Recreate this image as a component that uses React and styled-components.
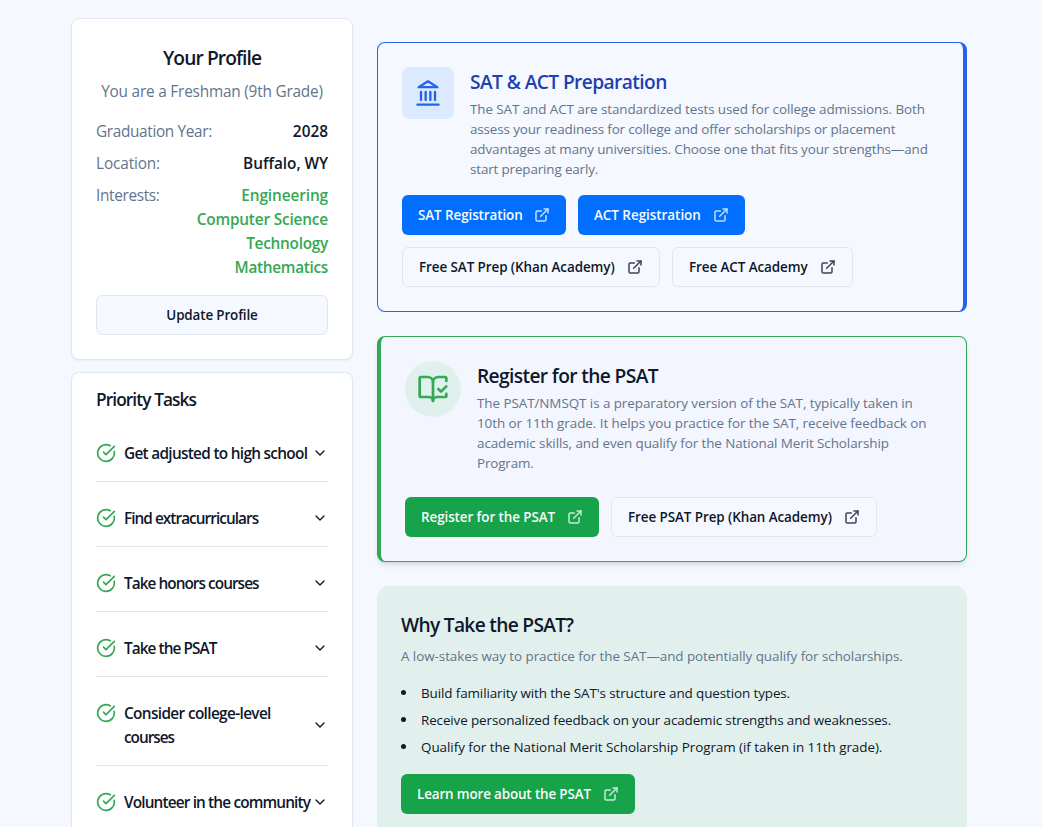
import React from 'react';
import styled, { createGlobalStyle } from 'styled-components';
import {
  BookOpenCheck,
  ChevronDown,
  CircleCheckBig,
  ExternalLink,
} from 'lucide-react';

const interests = [
  { name: 'Engineering', track: -0.1 },
  { name: 'Computer Science', track: -0.17 },
  { name: 'Technology', track: -0.26 },
  { name: 'Mathematics', track: -0.3 },
];

const tasks = [
  { lines: [['Get adjusted to high school', -0.7]] },
  { lines: [['Find extracurriculars', -0.96]] },
  { lines: [['Take honors courses', -0.96]] },
  { lines: [['Take the PSAT', -0.93]] },
  {
    lines: [
      ['Consider college-level', -0.64],
      ['courses', -1.03],
    ],
  },
  { lines: [['Volunteer in the community', -0.85]] },
];

const satText = [
  ['The SAT and ACT are standardized tests used for college admissions. Both', -0.09],
  ['assess your readiness for college and offer scholarships or placement', -0.14],
  ['advantages at many universities. Choose one that fits your strengths—and', -0.106],
  ['start preparing early.', -0.15],
];

const psatText = [
  ['The PSAT/NMSQT is a preparatory version of the SAT, typically taken in', -0.07],
  ['10th or 11th grade. It helps you practice for the SAT, receive feedback on', -0.06],
  ['academic skills, and even qualify for the National Merit Scholarship', -0.09],
  ['Program.', -0.15],
];

const reasons = [
  ["Build familiarity with the SAT's structure and question types.", -0.11],
  ['Receive personalized feedback on your academic strengths and weaknesses.', -0.12],
  ['Qualify for the National Merit Scholarship Program (if taken in 11th grade).', -0.05],
];

function LandmarkIcon() {
  return (
    <svg
      width="28"
      height="28"
      viewBox="0 0 24 24"
      fill="none"
      stroke="currentColor"
      strokeWidth="2"
      strokeLinecap="round"
      strokeLinejoin="round"
    >
      <line x1="3" x2="21" y1="22" y2="22" />
      <line x1="6" x2="6" y1="18" y2="11" />
      <line x1="10" x2="10" y1="18" y2="11" />
      <line x1="14" x2="14" y1="18" y2="11" />
      <line x1="18" x2="18" y1="18" y2="11" />
      <polygon points="12 2 20 7 4 7" />
    </svg>
  );
}

function LinkButton({ children, width, track, variant }) {
  return (
    <StyledLink href="#" $width={width} $track={track} $variant={variant}>
      {children}
      <ExternalLink size={16} strokeWidth={2.25} />
    </StyledLink>
  );
}

function Profile() {
  return (
    <ProfileCard>
      <ProfileTitle $track={-0.9}>Your Profile</ProfileTitle>
      <Grade>You are a Freshman (9th Grade)</Grade>
      <Details>
        <DetailRow>
          <Label $track={-0.34}>Graduation Year:</Label>
          <Value $track={0}>2028</Value>
        </DetailRow>
        <DetailRow>
          <Label $track={-0.13}>Location:</Label>
          <Value $track={-0.04}>Buffalo, WY</Value>
        </DetailRow>
        <DetailRow>
          <Label $track={-0.33}>Interests:</Label>
          <InterestList>
            {interests.map((item) => (
              <Interest key={item.name} $track={item.track}>
                {item.name}
              </Interest>
            ))}
          </InterestList>
        </DetailRow>
      </Details>
      <UpdateButton>Update Profile</UpdateButton>
    </ProfileCard>
  );
}

function PriorityTasks() {
  return (
    <TasksCard>
      <TasksTitle>Priority Tasks</TasksTitle>
      {tasks.map((task) => (
        <Task key={task.lines[0][0]}>
          <TaskIcon size={20} />
          <TaskName>
            {task.lines.map(([text, track]) => (
              <TaskLine key={text} $track={track}>
                {text}
              </TaskLine>
            ))}
          </TaskName>
          <ChevronDown size={16} />
        </Task>
      ))}
    </TasksCard>
  );
}

function CardText({ title, track, color, lines }) {
  return (
    <div>
      <Title $track={track} $color={color}>
        {title}
      </Title>
      <Description>
        {lines.map(([text, lineTrack]) => (
          <Line key={text} $track={lineTrack}>
            {text}
          </Line>
        ))}
      </Description>
    </div>
  );
}

function App() {
  return (
    <>
      <GlobalStyle />
      <Page>
        <Sidebar>
          <Profile />
          <PriorityTasks />
        </Sidebar>
        <Main>
          <SatCard>
            <CardHead>
              <SquareIcon>
                <LandmarkIcon />
              </SquareIcon>
              <CardText
                title="SAT & ACT Preparation"
                track={-0.6}
                color="#1e40af"
                lines={satText}
              />
            </CardHead>
            <Actions $top={16}>
              <LinkButton variant="blue" width={164} track={-0.09}>
                SAT Registration
              </LinkButton>
              <LinkButton variant="blue" width={167} track={-0.03}>
                ACT Registration
              </LinkButton>
              <LinkButton width={258} track={-0.08}>
                Free SAT Prep (Khan Academy)
              </LinkButton>
              <LinkButton width={181} track={-0.08}>
                Free ACT Academy
              </LinkButton>
            </Actions>
          </SatCard>

          <PsatCard>
            <CardHead>
              <RoundIcon>
                <BookOpenCheck size={32} />
              </RoundIcon>
              <CardText title="Register for the PSAT" track={-0.63} lines={psatText} />
            </CardHead>
            <Actions $top={24}>
              <LinkButton variant="green" width={194} track={-0.09}>
                Register for the PSAT
              </LinkButton>
              <LinkButton width={266} track={-0.08}>
                Free PSAT Prep (Khan Academy)
              </LinkButton>
            </Actions>
          </PsatCard>

          <WhyCard>
            <Title $track={-0.7}>Why Take the PSAT?</Title>
            <WhyText>
              A low-stakes way to practice for the SAT—and potentially qualify for scholarships.
            </WhyText>
            <ReasonList>
              {reasons.map(([text, track]) => (
                <Reason key={text} $track={track}>
                  {text}
                </Reason>
              ))}
            </ReasonList>
            <LinkButton variant="green" width={234} track={-0.15}>
              Learn more about the PSAT
            </LinkButton>
          </WhyCard>
        </Main>
      </Page>
    </>
  );
}

export default App;

const GlobalStyle = createGlobalStyle`
  *, *::before, *::after {
    box-sizing: border-box;
  }

  body {
    margin: 0;
    background-color: #f5f8ff;
    color: #0f172a;
    font-family: 'Open Sans', 'Noto Sans', sans-serif;
    font-size: 15.36px;
    line-height: 22px;
  }

  h2, h3, p, ul {
    margin: 0;
    padding: 0;
    list-style: none;
  }
`;

const Page = styled.div`
  display: grid;
  grid-template-columns: 282px 590px;
  gap: 24px;
  align-items: start;
  height: 100vh;
  padding: 18px 0 0 71px;
  overflow: hidden;
`;

const Sidebar = styled.aside`
  display: flex;
  flex-direction: column;
  gap: 12px;
`;

const Main = styled.main`
  display: flex;
  flex-direction: column;
  gap: 24px;
  padding-top: 24px;
`;

const ProfileCard = styled.section`
  background-color: #fff;
  border: 1px solid #e1e7ef;
  border-radius: 8px;
  box-shadow: 0 1px 2px rgba(0, 0, 0, 0.05);
  padding: 24px;
`;

const TasksCard = styled(ProfileCard)`
  padding-top: 13px;
`;

const Title = styled.h3`
  padding-top: 2px;
  color: ${(props) => props.$color || '#0f172a'};
  font-size: 19.2px;
  font-weight: 600;
  line-height: 26px;
  letter-spacing: ${(props) => props.$track}px;
`;

const ProfileTitle = styled(Title).attrs({ as: 'h2' })`
  text-align: center;
`;

const Grade = styled.p`
  margin: 8px 0 16px;
  padding-top: 2px;
  color: #64748b;
  letter-spacing: -0.2px;
  text-align: center;
  white-space: nowrap;
`;

const Details = styled.div`
  display: flex;
  flex-direction: column;
  gap: 8px;
`;

const DetailRow = styled.div`
  display: flex;
  justify-content: space-between;
`;

const Label = styled.span`
  padding-top: 2px;
  color: #64748b;
  letter-spacing: ${(props) => props.$track}px;
`;

const Value = styled.span`
  padding-top: 2px;
  font-weight: 600;
  letter-spacing: ${(props) => props.$track}px;
`;

const InterestList = styled.ul`
  text-align: right;
`;

const Interest = styled.li`
  padding-top: 2px;
  color: #34a853;
  font-weight: 600;
  letter-spacing: ${(props) => props.$track}px;
`;

const UpdateButton = styled.button`
  width: 100%;
  height: 40px;
  margin-top: 16px;
  background-color: #f5f8ff;
  border: 1px solid #e1e7ef;
  border-radius: 6px;
  color: #0f172a;
  font-family: inherit;
  font-size: 13.44px;
  font-weight: 600;
  letter-spacing: -0.15px;
`;

const TasksTitle = styled.h2`
  margin-bottom: 3px;
  font-size: 17.28px;
  font-weight: 600;
  line-height: 28px;
  letter-spacing: -0.9px;
`;

const Task = styled.div`
  display: flex;
  align-items: center;
  padding: 24px 0 16px;
  border-bottom: 1px solid #e1e7ef;

  svg {
    flex-shrink: 0;
  }
`;

const TaskIcon = styled(CircleCheckBig)`
  align-self: flex-start;
  margin: 2px 8px 0 0;
  color: #34a853;
`;

const TaskName = styled.div`
  flex: 1;
  min-width: 0;
  font-weight: 600;
`;

const Line = styled.span`
  display: block;
  letter-spacing: ${(props) => props.$track}px;
  white-space: nowrap;
`;

const TaskLine = styled(Line)`
  padding-top: 2px;
`;

const SatCard = styled.section`
  border: 1px solid #2563eb;
  border-right-width: 4px;
  border-radius: 8px;
  padding: 24px;
`;

const PsatCard = styled.section`
  background-color: #f3f6fe;
  border: 1px solid #34a853;
  border-left-width: 4px;
  border-radius: 8px;
  box-shadow: 0 4px 6px -1px rgba(0, 0, 0, 0.1), 0 2px 4px -2px rgba(0, 0, 0, 0.1);
  padding: 24px;
`;

const WhyCard = styled.section`
  height: 290px;
  background-color: #e1f0ed;
  border-radius: 12px;
  padding: 24px;
`;

const CardHead = styled.div`
  display: flex;
  align-items: flex-start;
  gap: 16px;
`;

const SquareIcon = styled.div`
  display: grid;
  place-items: center;
  width: 52px;
  height: 52px;
  background-color: #dbeafe;
  border-radius: 8px;
  color: #2563eb;
`;

const RoundIcon = styled.div`
  display: grid;
  place-items: center;
  width: 56px;
  height: 56px;
  background-color: #e0f0ec;
  border-radius: 50%;
  color: #34a853;
`;

const Description = styled.p`
  margin-top: 4px;
  color: #64748b;
  font-size: 13.44px;
  line-height: 20px;
`;

const Actions = styled.div`
  display: flex;
  flex-wrap: wrap;
  gap: 12px;
  margin-top: ${(props) => props.$top}px;
`;

const buttonColors = {
  blue: '#006fff',
  green: '#16a34a',
};

const StyledLink = styled.a`
  display: inline-flex;
  align-items: center;
  justify-content: space-between;
  width: ${(props) => props.$width}px;
  height: 40px;
  padding: 0 16px;
  background-color: ${(props) => buttonColors[props.$variant] || '#f5f8ff'};
  border: ${(props) => (props.$variant ? 'none' : '1px solid #e1e7ef')};
  border-radius: 6px;
  color: ${(props) => (props.$variant ? '#f8fafc' : '#0f172a')};
  font-size: 13.44px;
  font-weight: 600;
  letter-spacing: ${(props) => props.$track}px;
  text-decoration: none;
  white-space: nowrap;

  svg {
    opacity: 0.8;
  }
`;

const WhyText = styled.p`
  margin-top: 8px;
  color: #64748b;
  font-size: 13.44px;
  line-height: 20px;
  letter-spacing: -0.065px;
`;

const ReasonList = styled.ul`
  display: flex;
  flex-direction: column;
  gap: 7px;
  margin: 17px 0;
`;

const Reason = styled.li`
  display: flex;
  align-items: center;
  font-size: 13.44px;
  line-height: 20px;
  letter-spacing: ${(props) => props.$track}px;

  &::before {
    content: '';
    width: 5px;
    height: 5px;
    margin: 0 15px 2px 0;
    background-color: #0f172a;
    border-radius: 50%;
  }
`;
